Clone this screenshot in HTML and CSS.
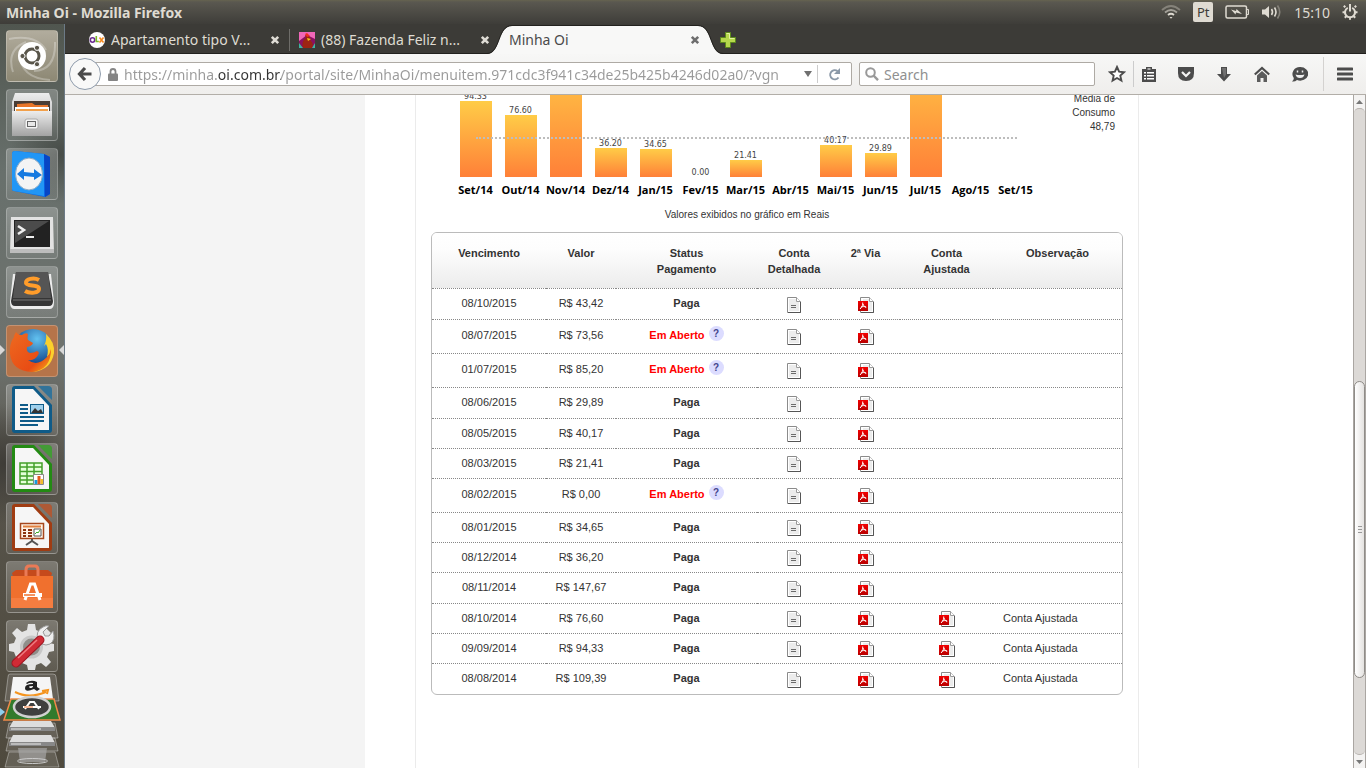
FILE: index.html
```html
<!DOCTYPE html>
<html lang="pt-BR">
<head>
<meta charset="utf-8">
<title>Minha Oi</title>
<link rel="stylesheet" href="styles.css">
</head>
<body>
<svg class="defs" width="0" height="0" aria-hidden="true">
  <defs>
    <linearGradient id="g-silver" x1="0" y1="0" x2="0" y2="1"><stop offset="0" stop-color="#ededed"/><stop offset="1" stop-color="#a3a3a3"/></linearGradient>
    <linearGradient id="g-red" x1="0" y1="0" x2="0" y2="1"><stop offset="0" stop-color="#f20000"/><stop offset="1" stop-color="#b80000"/></linearGradient>
    <symbol id="i-doc" viewBox="0 0 16 16">
      <path d="M1.500.5h9l4 4v11h-13z" fill="#fff" stroke="#8b8b8b"/>
      <path d="M14.500 5v10.500H2" fill="none" stroke="#555"/>
      <path d="M3 2h7v3h3v9H3z" fill="#ececec"/>
      <path d="M10.500.5v4h4" fill="#fff" stroke="#9a9a9a"/>
      <path d="M5 8.500h5M5 10.500h5" stroke="#6b6b6b"/>
    </symbol>
    <symbol id="i-pdf" viewBox="0 0 16 16">
      <path d="M2.500.5h9l4 4v11h-13z" fill="#fff" stroke="#8b8b8b"/>
      <path d="M15.500 5v10.500H3" fill="none" stroke="#555"/>
      <path d="M5 2h6v3h3v9H5z" fill="#ececec"/>
      <path d="M11.500.5v4h4" fill="#fff" stroke="#9a9a9a"/>
      <path d="M0 4h10v10H0z" fill="url(#g-red)"/>
      <path d="M4.700 5.500c.4 2-.6 4.600-2.700 6.500M5 7c.6 1.800 1.500 2.800 3.200 3.500M2.800 10.300c1.500-.8 3.500-1 5.400-.3" fill="none" stroke="#fff" stroke-width="1"/>
    </symbol>
    <symbol id="i-close" viewBox="0 0 16 16"><path d="M4.800 4.800l6.400 6.400M11.200 4.800l-6.400 6.400" stroke="currentColor" stroke-width="2.600"/></symbol>
    <symbol id="i-office" viewBox="0 0 52 52">
      <path d="M9 2h19l18 19v25q0 3-3 3H9q-3 0-3-3V5q0-3 3-3z" fill="currentColor"/>
      <path d="M32 2h10q4 0 4 4v10z" fill="currentColor"/>
      <path d="M32 2h10q4 0 4 4v10z" fill="#fff" opacity=".15"/>
      <path d="M9 5h18l16 17v24H9z" fill="#f6f6f6"/>
    </symbol>
  </defs>
</svg>

<header class="panel">
  <span class="panel-title">Minha Oi - Mozilla Firefox</span>
  <div class="indicators">
    <svg width="20" height="16" viewBox="0 0 20 16" fill="none" stroke-width="1.800"><path d="M1 6Q10-2 19 6" stroke="#85827a"/><path d="M4 8.500q6-5 12 0" stroke="#a5a29a"/><path d="M7 11q3-2.500 6 0" stroke="#dfdbd2"/><path d="M8.500 13h3l-1.500 1.800z" fill="#dfdbd2"/></svg>
    <span class="keyboard">Pt</span>
    <svg width="25" height="16" viewBox="0 0 25 16"><rect x="1" y="2" width="20.500" height="12" rx="1.500" fill="none" stroke="#dfdbd2" stroke-width="1.500"/><path d="M22 5.500h1.500v5H22" fill="none" stroke="#dfdbd2"/><path d="M6 5.500l5 1.500.5-2 5.500 5-6-1.500-.5 2z" fill="#dfdbd2"/></svg>
    <svg width="20" height="16" viewBox="0 0 20 16" fill="none" stroke="#dfdbd2" stroke-width="1.600"><path d="M0 5.500h3L7 2v12l-4-3.500H0z" fill="#dfdbd2" stroke="none"/><path d="M9.500 5q2 3 0 6M12.500 3.500q3 4.500 0 9"/><path d="M15.500 1.500q4.500 6.500 0 13" stroke="#85827a"/></svg>
    <time>15:10</time>
    <svg width="16" height="16" viewBox="0 0 16 16" fill="none" stroke="#dfdbd2" stroke-width="2"><path d="M5.800 3.800a5 5 0 1 0 4.400 0M8 0v7.500M3.300 3.300L1.800 1.800M12.700 3.300l1.500-1.500M3 8.300H.5M13 8.300h2.500M4.500 12l-1.700 1.800M11.500 12l1.700 1.800M8 13v2.800"/></svg>
  </div>
</header>

<div class="desktop">
  <nav class="launcher" aria-label="Lançador">
    <button class="tile tile-dash" aria-label="Início"><svg viewBox="0 0 52 52"><g fill="none" stroke="#fff" opacity=".28"><path d="M3 9Q30 4 40 20M49 12Q50 40 28 41M44 50Q14 48 14 24M7 42Q0 20 20 12" stroke-width="2"/></g><circle cx="26" cy="26" r="14" fill="#fff"/><circle cx="26" cy="26" r="7" fill="none" stroke="#59554a" stroke-width="3"/><g fill="#59554a" stroke="#fff" stroke-width="1"><circle cx="16.500" cy="26" r="2.600"/><circle cx="31" cy="17.800" r="2.600"/><circle cx="31" cy="34.200" r="2.600"/></g></svg></button>
    <button class="tile" aria-label="Arquivos"><svg viewBox="0 0 52 52"><path d="M9 4h34l3 9v33H6V13z" fill="url(#g-silver)"/><path d="M8 12h36v12H8z" fill="#4a3d35"/><path d="M11 15l15-1 3 2h13v8H11z" fill="#e8762b"/><path d="M9 18h34v4H9z" fill="#fff"/><path d="M10 20h32v3H10z" fill="#f2a04a"/><path d="M6 22h40v25H6z" fill="url(#g-silver)"/><rect x="19" y="30" width="13" height="10" rx="2" fill="#f4f4f4" stroke="#aaa"/><rect x="21.500" y="32.500" width="8" height="5" fill="#e8e8e8" stroke="#666"/></svg></button>
    <button class="tile" aria-label="TeamViewer"><svg viewBox="0 0 52 52"><path d="M9 3l29 3 6 3v37l-5 3-31-6q-2 0-2-2V6q0-3 3-3z" fill="#0b69e8"/><path d="M9 3l29 3v42L8 43q-2 0-2-2V6q0-3 3-3z" fill="#2196f5"/><path d="M38 6l6 3v37l-5 3z" fill="#0745c4"/><ellipse cx="23" cy="26" rx="13.500" ry="16" fill="#f4f4f4" stroke="#8ba9c4"/><path d="M11 26l7-6v4l10 1v-4l8 6-8 5v-3l-10-1v4z" fill="#167ae0"/></svg></button>
    <button class="tile" aria-label="Terminal"><svg viewBox="0 0 52 52"><path d="M5 10h42l1 36H4z" fill="#e2e2e2"/><path d="M4 42h44v4H4z" fill="#bdbdbd"/><path d="M8 13h36v27H8z" fill="#222"/><path d="M9 14h34L9 36z" fill="#4b4b4b"/><path d="M12 19l6 4-6 4" fill="none" stroke="#eee" stroke-width="2.500"/><path d="M20 30h8" stroke="#eee" stroke-width="2"/></svg></button>
    <button class="tile" aria-label="Sublime Text"><svg viewBox="0 0 52 52"><path d="M7 8l-3 28q0 7 4 7h36q4 0 4-7L45 8" fill="#ececec"/><path d="M10 6h32l5 29q0 5-4 5H9q-4 0-4-5z" fill="#353535"/><path d="M10 6h32l3 26H7z" fill="#555"/><path d="M7 34h38" stroke="#777"/><path d="M33 14c-5-3-14-1-13 3 1 4 13 1 13 6 0 4-9 5-14 2" fill="none" stroke="#ff9c2a" stroke-width="4"/></svg></button>
    <button class="tile tile-active" aria-label="Firefox"><svg viewBox="0 0 52 52"><defs><radialGradient id="g-globe" cx=".6" cy=".25" r=".7"><stop offset="0" stop-color="#62c2f0"/><stop offset="1" stop-color="#0b3a84"/></radialGradient><linearGradient id="g-fox" x1="0" y1="0" x2="1" y2="1"><stop offset="0" stop-color="#ee6a20"/><stop offset=".7" stop-color="#e84c14"/><stop offset="1" stop-color="#f9b31c"/></linearGradient></defs><circle cx="27" cy="24" r="20" fill="url(#g-globe)"/><path d="M40 9q9 8 8 19-3 17-21 19 16-6 17-18l-3 3q2-8-1-13l-2 2q3-6 2-12z" fill="#fbd02c"/><path d="M8 12q0-2 2-5 2 3 6 3 4-3 6-1-1 4 0 6l5 3q-1 3-6 4-1 5 3 6 4 0 7-2 3 1 1 4-3 6-10 5 9 7 19-3 3-3 4-8 0 21-19 23Q6 46 4 29q-1-10 4-17z" fill="url(#g-fox)"/></svg></button>
    <button class="tile tile-writer" aria-label="Writer"><svg viewBox="0 0 52 52"><use href="#i-office"/><path d="M14 21h8M14 25h8M14 29h8M14 33h24M14 37h24M14 41h18" stroke="#0f5b88" stroke-width="2"/><path d="M24 20h14v10H24z" fill="#0f5b88"/><path d="M25 21h12v8H25z" fill="#9fd0ec"/><path d="M25 29l4-5 3 3 3-2 2 4z" fill="#333"/></svg></button>
    <button class="tile tile-calc" aria-label="Calc"><svg viewBox="0 0 52 52"><use href="#i-office"/><path d="M14 20h22v21H14z" fill="#e4ffd8"/><path d="M14 20h22v21H14zM14 24h22M14 28.500h22M14 33h22M14 37h22M21 20v21M28 20v21" fill="none" stroke="#43a02a" stroke-width="1.500"/><path d="M27.500 31.500h10v10h-10z" fill="#fff" stroke="#888"/><path d="M28.500 37h3v4h-3z" fill="#199bdc"/><path d="M31.500 33h3v8h-3z" fill="#e3591c"/><path d="M34.500 36h2.500v5h-2.500z" fill="#f2bd28"/></svg></button>
    <button class="tile tile-impress" aria-label="Impress"><svg viewBox="0 0 52 52"><use href="#i-office"/><path d="M14.500 21.500h23v15h-23z" fill="#fff3e8" stroke="#a6471e" stroke-width="1.500"/><path d="M17 24.500h18" stroke="#e08040" stroke-width="2"/><path d="M17 28h3M17 31h3M17 34h3M22 28h4M22 31h4M22 34h4" stroke="#8c3310" stroke-width="1.800"/><path d="M28 27h7v7h-7z" fill="#fff" stroke="#555"/><path d="M29 32l2-2 1 1 2-3" fill="none" stroke="#3fae2a"/><path d="M26 37v2M20 43l6-4 6 4" fill="none" stroke="#555" stroke-width="2"/></svg></button>
    <button class="tile" aria-label="Central de Programas"><svg viewBox="0 0 52 52"><path d="M6 12l4-3h32l4 3-1 4H7z" fill="#c54a1c"/><path d="M20 16V9q0-4 3-4h6q3 0 3 4v7" fill="none" stroke="#ea7a56" stroke-width="3"/><path d="M5 15h42v32H5z" fill="#f0702e"/><path d="M5 37h42v10H5z" fill="#f78348" opacity=".7"/><path d="M19 39l5.500-16h4L34 39" fill="none" stroke="#fff" stroke-width="3"/><path d="M17 34h19" stroke="#fff" stroke-width="4"/><path d="M18 34h11" stroke="#f0702e" stroke-width="1.500"/></svg></button>
    <button class="tile" aria-label="Configurações"><svg viewBox="0 0 52 52"><path d="M22 4h7l1 6 5 2 5-4 5 5-4 5 2 5 5 1v7l-5 1-2 5 4 5-5 5-5-4-5 2-1 5h-7l-1-5-5-2-5 4-5-5 4-5-2-5-5-1v-7l5-1 2-5-4-5 5-5 5 4 5-2z" fill="#e4e4e4"/><circle cx="25.500" cy="27" r="10" fill="#8f8e8a" stroke="#c7c7c7" stroke-width="3"/><path d="M32 20q-3-9 5-13 3-2 6-1l-6 6 2 4 4 0 4-5q3 9-3 13-4 2-8 0z" fill="#eee" stroke="#999"/><path d="M34 20L10 43" stroke="#9d1520" stroke-width="9" stroke-linecap="round"/><path d="M34 20L10 43" stroke="#d02b35" stroke-width="7" stroke-linecap="round"/><path d="M31 20L12 38" stroke="#ef7b80" stroke-width="1.500"/></svg></button>
    <svg class="folded" viewBox="0 0 65 95" aria-hidden="true">
      <g fill="#fff" fill-opacity=".12" stroke="#fff" stroke-opacity=".35">
        <path d="M10 1h43q3 0 3 3l3 24H5l3-24q0-3 2-3z"/><path d="M9 50h46l3 15H6zM9 65h46l3 13H6zM9 79h46l4 15H5z"/></g>
      <path d="M13 4h37l3 22H10z" fill="#f5f5f5"/>
      <path d="M26 10q5-4 11-1v5l3 2-3 2-3-2q-9 4-9-1 0-4 8-4v-1q-3-1-6 1z" fill="#222"/><path d="M29 14q0-1 4-1 0 2-3 2z" fill="#f5f5f5"/>
      <path d="M15 19q14 7 31 0M42 18l6-1-1 4" fill="none" stroke="#f5941e" stroke-width="2"/>
      <path d="M11 26h43l6 21H4z" fill="#327a2c" stroke="#f08a4a" stroke-width="1.500"/>
      <ellipse cx="32" cy="34" rx="18" ry="10" fill="#3f3f3f" stroke="#d0d0d0" stroke-width="2.500"/>
      <path d="M25 36l5-7h4l5 7M23 34h18" fill="none" stroke="#fff" stroke-width="2"/><path d="M24 34h9" stroke="#f0702e"/>
      <path d="M0 35l5 4-5 4z" fill="#8fd0ee"/>
      <g><path d="M13 48h38l4 7H9z" fill="#ddd"/><path d="M9 54h46v4H9z" fill="#888"/><path d="M11 56h30" stroke="#eee"/><path d="M13 62h38l4 8H9z" fill="#ddd"/><path d="M9 69h46v4H9z" fill="#888"/><path d="M11 71h30" stroke="#eee"/></g>
      <path d="M18 75h29l-2 14H20z" fill="#aaa" opacity=".65"/><ellipse cx="32.500" cy="88" rx="15" ry="2.500" fill="none" stroke="#ccc"/>
    </svg>
    <i class="pip pip-left"></i><i class="pip pip-right"></i>
  </nav>

  <div class="browser">
    <div class="tabs">
      <div class="tab">
        <svg width="16" height="16" viewBox="0 0 16 16"><circle cx="8" cy="8" r="8" fill="#fff"/><circle cx="3.500" cy="8" r="2.200" fill="none" stroke="#6b2c91" stroke-width="1.600"/><path d="M7.300 4v5.500h2.500" fill="none" stroke="#7bb928" stroke-width="1.600"/><path d="M10.500 5.500l4 5M14.500 5.500l-4 5" stroke="#f58a1f" stroke-width="1.600"/></svg>
        <a href="#" class="tab-label">Apartamento tipo V...</a>
        <button class="tab-close" aria-label="Fechar aba"><svg width="16" height="16"><use href="#i-close"/></svg></button>
      </div>
      <div class="tab tab-split">
        <svg width="16" height="16" viewBox="0 0 16 16"><path d="M0 0h16v16H0z" fill="#8b1160"/><path d="M0 0h16v7L8 3 0 9z" fill="#f067b8"/><path d="M4 16q-2-7 3-10l-1-3 4 1 2 5q3 3 1 7z" fill="#9c2413"/><path d="M6 2l2-1 3 3-3 1z" fill="#f02b20"/><path d="M8 6l4 1-3 2z" fill="#f6c31c"/><path d="M0 11l4 5H0zM16 11l-3 5h3z" fill="#3fb6a0"/></svg>
        <a href="#" class="tab-label">(88) Fazenda Feliz n...</a>
        <button class="tab-close" aria-label="Fechar aba"><svg width="16" height="16"><use href="#i-close"/></svg></button>
      </div>
      <div class="tab tab-current">
        <svg class="tab-shape" viewBox="0 0 236 30" preserveAspectRatio="none"><path d="M0 30C14 30 10 2 25 2H211C226 2 222 30 236 30z" fill="#f8f8f7"/><path d="M0 29.500C14 29 10 1.500 25 1.500H211C226 1.500 222 29 236 29.500" fill="none" stroke="#22211e"/></svg>
        <a href="#" class="tab-label">Minha Oi</a>
        <button class="tab-close" aria-label="Fechar aba"><svg width="16" height="16"><use href="#i-close"/></svg></button>
      </div>
      <button class="tab-new" aria-label="Nova aba"><svg width="16" height="16" viewBox="0 0 16 16"><path d="M5.500.5h5v5h5v5h-5v5h-5v-5h-5v-5h5z" fill="#b6d84c" stroke="#5d8a1c"/><path d="M6.500 1.500h3v5h5" fill="none" stroke="#e3f2a0"/></svg></button>
    </div>

    <div class="toolbar">
      <button class="back" aria-label="Voltar"><svg width="16" height="16" viewBox="0 0 16 16"><path d="M8 2L2.500 8 8 14M3 8h11.500" fill="none" stroke="#4a4a4a" stroke-width="3.200"/></svg></button>
      <div class="urlbar">
        <svg width="10" height="13" viewBox="0 0 10 13"><path d="M2.500 6V3.500a2.500 2.500 0 0 1 5 0V6" fill="none" stroke="#858585" stroke-width="1.800"/><rect y="5.500" width="10" height="7.500" rx="1" fill="#858585"/></svg>
        <input class="url" aria-label="Endereço" value="https://minha.oi.com.br/portal/site/MinhaOi/menuitem.971cdc3f941c34de25b425b4246d02a0/?vgn">
        <button class="url-drop" aria-label="Histórico"><svg width="8" height="6" viewBox="0 0 8 6"><path d="M0 0h8L4 6z" fill="#707070"/></svg></button>
        <button class="reload" aria-label="Recarregar"><svg width="13" height="13" viewBox="0 0 13 13"><path d="M10.500 9.500A4.600 4.600 0 1 1 9.500 3" fill="none" stroke="#8b99a8" stroke-width="2"/><path d="M12 0v6H6z" fill="#8b99a8"/></svg></button>
      </div>
      <div class="searchbar">
        <svg width="14" height="14" viewBox="0 0 14 14"><circle cx="5.500" cy="5.500" r="4.300" fill="none" stroke="#999" stroke-width="2"/><path d="M8.500 8.500l4.500 4.700" stroke="#999" stroke-width="2.400"/></svg>
        <input class="search" aria-label="Pesquisar" placeholder="Search">
      </div>
      <div class="tools">
        <button aria-label="Favoritar"><svg width="18" height="18" viewBox="0 0 18 18"><path d="M9 2l2.100 4.700 5 .5-3.800 3.400 1.100 5L9 13l-4.400 2.600 1.100-5L1.900 7.200l5-.5z" fill="#fff" stroke="#4c4c4c" stroke-width="1.900"/></svg></button>
        <button class="tool-list" aria-label="Lista de favoritos"><svg width="16" height="16" viewBox="0 0 16 16"><path d="M5 3V1h6v2h4v13H1V3z" fill="#4c4c4c"/><path d="M6.500 2h3v2h-3z" fill="#aaa"/><path d="M3 6h2v1.500H3zM6 6h7v1.500H6zM3 9h2v1.500H3zM6 9h7v1.500H6zM3 12h2v1.500H3zM6 12h7v1.500H6z" fill="#fff"/></svg></button>
        <button aria-label="Pocket"><svg width="16" height="16" viewBox="0 0 16 16"><path d="M0 1h16v6q0 8-8 8t-8-8z" fill="#4c4c4c"/><path d="M4 6l4 4 4-4" fill="none" stroke="#f4f4f3" stroke-width="2.200"/></svg></button>
        <button aria-label="Downloads"><svg width="16" height="16" viewBox="0 0 16 16"><path d="M5 1h6v7h4l-7 7.500L1 8h4z" fill="#4c4c4c"/><path d="M6 2h4v6.500L8 12z" fill="#707070"/></svg></button>
        <button aria-label="Página inicial"><svg width="16" height="16" viewBox="0 0 16 16"><path d="M.8 8.500L8 2l7.200 6.500" fill="none" stroke="#4c4c4c" stroke-width="2.200"/><path d="M3 9.500L8 5l5 4.500V16H9.500v-4h-3v4H3z" fill="#5c5c5c"/></svg></button>
        <button aria-label="Chat"><svg width="16" height="16" viewBox="0 0 16 16"><path d="M8 1a8 6.800 0 1 1-3 13Q3 16 0 15.500q2-1.500 1.800-3.500A7.400 7 0 0 1 8 1z" fill="#4c4c4c"/><path d="M3.500 8.500q4.500 1 9 0-1 3.500-4.500 3.500t-4.500-3.500z" fill="#eee"/><path d="M5.500 4.500v2M10.500 4.500v2" stroke="#eee" stroke-width="1.500"/></svg></button>
        <button class="tool-menu" aria-label="Menu"><svg width="16" height="14" viewBox="0 0 16 14"><path d="M1 2h14M1 7h14M1 12h14" stroke="#4c4c4c" stroke-width="3" stroke-linecap="round"/></svg></button>
      </div>
    </div>

    <div class="viewport">
      <div class="page">
        <div class="gutter"></div>
        <main class="content">
          <section class="usage">
            <div class="chart">
              <div class="plot">
                <div class="col"><span>94.33</span><b style="height:76px"></b></div>
                <div class="col"><span>76.60</span><b style="height:62px"></b></div>
                <div class="col"><b style="height:119px"></b></div>
                <div class="col"><span>36.20</span><b style="height:29px"></b></div>
                <div class="col"><span>34.65</span><b style="height:28px"></b></div>
                <div class="col"><span>0.00</span></div>
                <div class="col"><span>21.41</span><b style="height:17px"></b></div>
                <div class="col"></div>
                <div class="col"><span>40.17</span><b style="height:32px"></b></div>
                <div class="col"><span>29.89</span><b style="height:24px"></b></div>
                <div class="col"><b style="height:128px"></b></div>
                <div class="col"></div>
                <div class="col"></div>
                <div class="average"></div>
              </div>
              <div class="months"><span>Set/14</span><span>Out/14</span><span>Nov/14</span><span>Dez/14</span><span>Jan/15</span><span>Fev/15</span><span>Mar/15</span><span>Abr/15</span><span>Mai/15</span><span>Jun/15</span><span>Jul/15</span><span>Ago/15</span><span>Set/15</span></div>
            </div>
            <p class="mean">Média de<br>Consumo<br>48,79</p>
          </section>
          <p class="caption">Valores exibidos no gráfico em Reais</p>

          <div class="bills">
            <table>
              <colgroup><col class="c-due"><col class="c-value"><col class="c-status"><col class="c-detail"><col class="c-copy"><col class="c-adjusted"><col class="c-note"></colgroup>
              <thead><tr><th>Vencimento</th><th>Valor</th><th>Status<br>Pagamento</th><th>Conta<br>Detalhada</th><th>2ª Via</th><th>Conta<br>Ajustada</th><th>Observação</th></tr></thead>
              <tbody id="rows"></tbody>
            </table>
          </div>
        </main>
      </div>
      <div class="scroll">
        <button aria-label="Rolar para cima"><svg width="7" height="4" viewBox="0 0 7 4"><path d="M0 4h7L3.500 0z" fill="#777"/></svg></button>
        <div class="track"><div class="thumb"><i></i></div></div>
        <button aria-label="Rolar para baixo"><svg width="7" height="4" viewBox="0 0 7 4"><path d="M0 0h7L3.500 4z" fill="#777"/></svg></button>
      </div>
    </div>
  </div>
</div>
<script src="bills.js"></script>
</body>
</html>
```

FILE: bills.js
```js
const bills = [
  ["08/10/2015", "43,42", true],
  ["08/07/2015", "73,56", false],
  ["01/07/2015", "85,20", false],
  ["08/06/2015", "29,89", true],
  ["08/05/2015", "40,17", true],
  ["08/03/2015", "21,41", true],
  ["08/02/2015", "0,00", false],
  ["08/01/2015", "34,65", true],
  ["08/12/2014", "36,20", true],
  ["08/11/2014", "147,67", true],
  ["08/10/2014", "76,60", true, true],
  ["09/09/2014", "94,33", true, true],
  ["08/08/2014", "109,39", true, true]
];

const link = (icon, label) =>
  `<a href="#" aria-label="${label}"><svg width="16" height="16"><use href="#${icon}"/></svg></a>`;

document.getElementById("rows").innerHTML = bills.map(([due, value, paid, adjusted]) => `
  <tr class="${paid ? "paid" : "open"}">
    <td>${due}</td>
    <td>R$ ${value}</td>
    <td class="status">${paid ? "Paga" : 'Em Aberto <button class="help">?</button>'}</td>
    <td class="file">${link("i-doc", "Conta detalhada")}</td>
    <td class="file">${link("i-pdf", "Segunda via")}</td>
    <td class="file">${adjusted ? link("i-pdf", "Conta ajustada") : ""}</td>
    <td class="note">${adjusted ? "Conta Ajustada" : ""}</td>
  </tr>`).join("");
```

FILE: styles.css
```css
* { box-sizing: border-box; }
body { margin: 0; height: 100vh; display: flex; flex-direction: column; overflow: hidden; font-family: "Liberation Sans", Arial, sans-serif; font-size: 11px; color: #333; }
button { border: 0; padding: 0; background: none; font: inherit; color: inherit; display: flex; align-items: center; justify-content: center; }
svg { display: block; flex: none; }
p { margin: 0; }
.defs { position: absolute; }

/* system panel */
.panel { height: 24px; flex: none; display: flex; align-items: center; justify-content: space-between; padding: 0 8px 0 6px; background: linear-gradient(#66634f, #5a5850 2px, #3e3d39); color: #dfdbd2; font-family: "Noto Sans", sans-serif; font-size: 14px; }
.panel-title { font-weight: bold; }
.indicators { display: flex; align-items: center; gap: 12px; }
.keyboard { width: 20px; height: 20px; border-radius: 2px; background: #dfdbd2; color: #3c3b37; font-size: 13px; line-height: 20px; text-align: center; }

.desktop { flex: 1; min-height: 0; display: flex; }

/* launcher */
.launcher { position: relative; width: 65px; flex: none; display: flex; flex-direction: column; align-items: center; gap: 7px; padding-top: 6px; overflow: hidden; border-right: 1px solid #6c7a86; background: radial-gradient(circle at 60px 130px, #474c48, transparent 50px), radial-gradient(circle at 5px 440px, #3e3c37, transparent 60px), linear-gradient(#50564f, #68706c 20%, #6e726e 45%, #57544b 60%, #4f4a3e); }
.tile { width: 52px; height: 52px; flex: none; border: 1px solid rgba(255, 255, 255, .22); border-radius: 4px; background: linear-gradient(rgba(255, 255, 255, .24), rgba(255, 255, 255, .08)); }
.tile svg { width: 52px; height: 52px; }
.tile-dash { background: linear-gradient(#b1ac9d, #8d8874); }
.tile-active { background: #b5744a; }
.tile-writer { color: #0f5b88; }
.tile-calc { color: #238a13; }
.tile-impress { color: #a03c12; }
.folded { width: 65px; height: 95px; margin-top: -6px; }
.pip { position: absolute; top: 321px; border: 5px solid transparent; }
.pip-left { left: 0; border-left-color: #d8d8d8; border-right-width: 0; }
.pip-right { right: 0; border-right-color: #d8d8d8; border-left-width: 0; }

/* browser chrome */
.browser { flex: 1; min-width: 0; display: flex; flex-direction: column; }
.tabs { height: 30px; flex: none; display: flex; align-items: center; padding-left: 14px; background: #3c3b37; border-bottom: 1px solid #22211e; font-family: "Noto Sans", sans-serif; font-size: 14px; color: #dfdbd2; }
.tab { position: relative; width: 210px; height: 30px; display: flex; align-items: center; gap: 6px; padding: 2px 6px 0 10px; }
.tab-split::before { content: ""; position: absolute; left: 0; top: 5px; height: 22px; border-left: 1px solid #6e6d69; }
.tab-label { flex: 1; min-width: 0; overflow: hidden; white-space: nowrap; color: inherit; text-decoration: none; }
.tab-close { color: #e0ddd6; }
.tab-current { color: #4a4a4a; }
.tab-current > * { position: relative; }
.tab-current .tab-close { color: #6e6e6e; }
.tab-current .tab-shape { position: absolute; left: -12px; top: 0; width: 236px; height: 30px; }
.tab-new { margin: 2px 0 0 11px; }

.toolbar { height: 41px; flex: none; display: flex; align-items: center; padding: 0 13px 0 4px; background: linear-gradient(#f7f7f6, #efeeec); border-bottom: 1px solid #b2aea8; font-family: "Noto Sans", sans-serif; font-size: 14px; }
.back { width: 32px; height: 32px; flex: none; z-index: 1; border: 1px solid #8e9bab; border-radius: 50%; background: #f9f9f8; }
.urlbar, .searchbar { height: 24px; display: flex; align-items: center; background: #fff; border: 1px solid #aeaaa4; border-radius: 2px; }
.urlbar { flex: 1; min-width: 0; margin-left: -8px; padding-left: 14px; gap: 6px; }
.url, .search { flex: 1; min-width: 0; height: 20px; border: 0; outline: 0; padding: 0; font: inherit; background: none; }
.url { color: transparent; background: linear-gradient(90deg, #9a9a9a 94px, #333 94px, #333 157px, #9a9a9a 157px); background-clip: text; -webkit-background-clip: text; }
.url-drop { width: 16px; }
.reload { width: 34px; height: 18px; margin-left: -5px; border-left: 1px solid #ccc; }
.searchbar { width: 236px; flex: none; margin-left: 7px; padding-left: 5px; gap: 5px; }
.search::placeholder { color: #909090; opacity: 1; }
.tools { display: flex; align-items: center; margin-left: 13px; }
.tools button { width: 38px; height: 26px; }
.tools button:first-child { width: 18px; }
.tools .tool-list { width: 34px; margin-left: 7px; padding-right: 4px; border-left: 1px solid #ccc; }
.tools .tool-menu { width: 30px; height: 34px; margin-left: 4px; padding-left: 12px; border-left: 1px solid #d4d2d0; }

/* page */
.viewport { flex: 1; min-height: 0; display: flex; }
.page { flex: 1; min-width: 0; display: grid; grid-template-columns: 300px minmax(0, 724px) 1fr; column-gap: 50px; overflow: hidden; background: #fff; }
.gutter { background: #f4f4f4; }
.content { padding: 0 15px; border: solid #ebebeb; border-width: 0 1px; }
.usage { display: flex; justify-content: space-between; padding: 0 8px 0 22px; }
.plot { position: relative; height: 82px; display: flex; align-items: flex-end; overflow: hidden; }
.col { width: 45px; display: flex; flex-direction: column; align-items: center; justify-content: flex-end; font-family: "DejaVu Sans", sans-serif; font-size: 8px; line-height: 8px; color: #444; }
.col b { width: 32px; background: linear-gradient(#ffcc47, #ff8038); }
.average { position: absolute; left: 23px; right: 21px; top: 42px; border-top: 2px dotted #bdbdbd; }
.months { display: flex; padding-top: 6px; font-family: "Open Sans", sans-serif; font-size: 11px; font-weight: bold; line-height: 14px; color: #000; }
.months span { width: 45px; text-align: center; }
.mean { margin-top: -3px; font-size: 10px; line-height: 14px; text-align: right; }
.caption { padding: 11px 60px 10px 0; font-size: 10px; line-height: 14px; text-align: center; }

.bills { border: 1px solid #bbb; border-radius: 6px; overflow: hidden; }
table { width: 100%; table-layout: fixed; border-collapse: separate; border-spacing: 0; line-height: 16px; text-align: center; }
.c-due { width: 114px; }
.c-value { width: 70px; }
.c-status { width: 141px; }
.c-detail { width: 74px; }
.c-copy { width: 69px; }
.c-adjusted { width: 93px; }
thead { background: linear-gradient(#fff, #fdfdfd 30%, #ececec); }
th { height: 55px; padding: 12px 0 0; vertical-align: top; }
td { height: 30px; padding: 0 0 2px; border-top: 1px dotted #888; }
tr:nth-child(3n+1) td { height: 31px; }
tr.open td { height: 34px; padding-bottom: 4px; }
tr td.file, tr.open td.file { padding: 0; }
.status { font-weight: bold; }
.open .status { color: #f00; }
td a { display: inline-block; vertical-align: middle; }
.help { display: inline-block; width: 15px; height: 15px; margin: -2px 0 0 1px; vertical-align: 2px; border-radius: 50%; background: #dcdcff; color: #44448c; font-size: 10px; line-height: 15px; }
tr td.note { padding-left: 10px; text-align: left; }

.scroll { width: 13px; flex: none; display: flex; flex-direction: column; background: #f4f3f2; border: solid #aaa6a2; border-width: 0 1px; }
.scroll button { height: 13px; flex: none; }
.track { flex: 1; background: #dcd9d6; border: solid #b8b4b0; border-width: 1px 0; border-radius: 5px; }
.thumb { height: 46%; margin-top: 272px; display: flex; align-items: center; justify-content: center; border: 1px solid #8f8c88; border-radius: 6px; background: linear-gradient(90deg, #fff, #e4e2e0); }
.thumb i { width: 4px; height: 7px; background: repeating-linear-gradient(#999 0 1px, transparent 1px 3px); }
```
